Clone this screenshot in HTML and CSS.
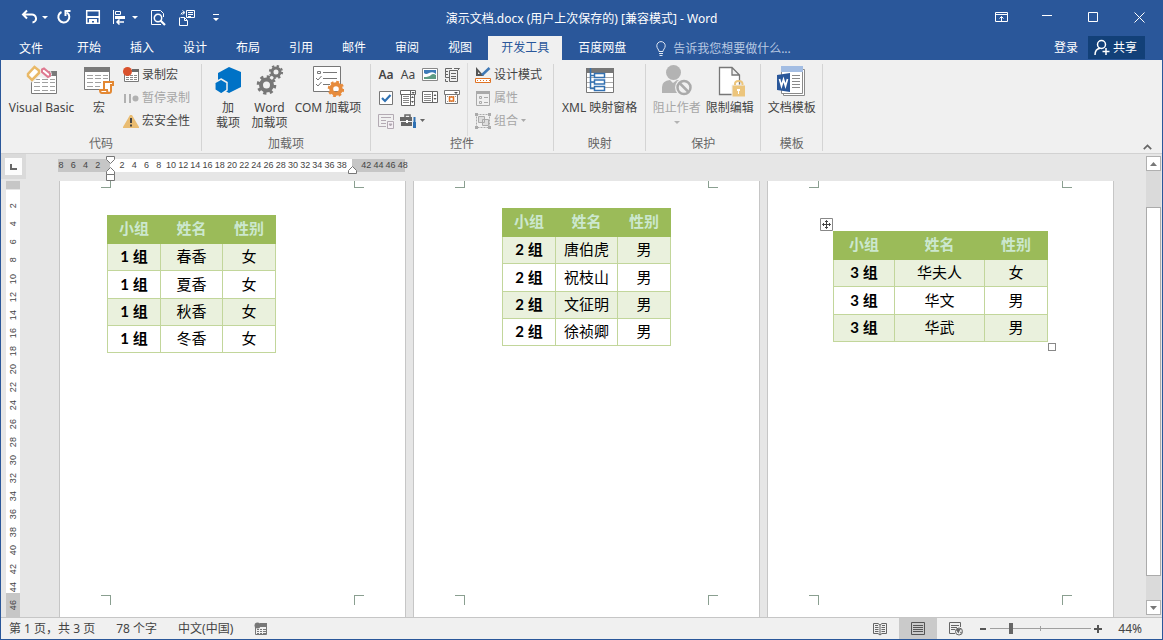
FILE: index.html
```html
<!DOCTYPE html>
<html lang="zh-CN">
<head>
<meta charset="utf-8">
<title>演示文档.docx - Word</title>
<link rel="stylesheet" href="styles.css">
</head>
<body>
<div class="window">
  <header class="titlebar">
    <div class="qat">
      <button class="qat-btn split" aria-label="撤消"><svg width="16" height="16" viewBox="0 0 16 16" fill="none" stroke="#fff" stroke-width="2"><path d="M6 1.500L2 5.500L6 9.500M2 5.500H10.500A4 4 0 0 1 11.500 13.500"/></svg></button>
      <button class="qat-drop" aria-label="撤消选项"><svg width="6" height="3" viewBox="0 0 6 3" fill="#fff"><path d="M0 0H6L3 3Z"/></svg></button>
      <button class="qat-btn" aria-label="重复"><svg width="16" height="16" viewBox="0 0 16 16" fill="none" stroke="#fff" stroke-width="2"><path d="M5.500 3A5.500 5.500 0 1 0 11 3.500M9.500 7V2H14.500"/></svg></button>
      <button class="qat-btn" aria-label="保存"><svg width="16" height="16" viewBox="0 0 16 16" fill="none" stroke="#fff" stroke-width="1.500"><path d="M1.700 1.700H14.300V14.300H1.700Z"/><path fill="#fff" stroke="none" d="M2 7H14V9H2ZM4 10H12V14H9V12H7V14H4Z"/></svg></button>
      <button class="qat-btn split" aria-label="对齐"><svg width="14" height="16" viewBox="0 0 14 16" fill="none" stroke="#fff"><path d="M1.500 1V15M3.500 2.500H8.500V5.500H3.500Z"/><path fill="#fff" stroke="none" d="M3 7H13V10H3Z"/><path stroke-width="1.500" d="M12 13H5M7.500 10.500L5 13L7.500 15.500"/></svg></button>
      <button class="qat-drop" aria-label="对齐选项"><svg width="6" height="3" viewBox="0 0 6 3" fill="#fff"><path d="M0 0H6L3 3Z"/></svg></button>
      <button class="qat-btn preview" aria-label="打印预览"><svg width="16" height="17" viewBox="0 0 16 17" fill="none" stroke="#fff"><path d="M13.500 8V4.500L10.500 1.500H1.500V15.500H11"/><circle cx="8" cy="9" r="3.700" stroke-width="1.500"/><path stroke-width="2.200" d="M10.500 11.500L15 16"/></svg></button>
      <button class="qat-btn" aria-label="比较"><svg width="18" height="17" viewBox="0 0 18 17" fill="none" stroke="#fff"><path d="M8.500 1.500H16.500V8.500H8.500ZM10 3.500H15M10 5.500H15M10 7.500H13M2.500 8.500H6.500L9.500 11.500V16.500H1.500V8.500M6.500 8.500V11.500H9M3 5.500Q3 3.500 6 3.500M4.500 1.500L7 3.500L4.500 5.500"/></svg></button>
      <button class="qat-btn" aria-label="自定义快速访问工具栏"><svg width="6" height="7" viewBox="0 0 6 7" fill="#fff"><path d="M0 0H6V1H0ZM0 4H6L3 7Z"/></svg></button>
    </div>
    <h1 class="doc-title">演示文档.docx (用户上次保存的) [兼容模式] - Word</h1>
    <div class="win-controls">
      <button aria-label="功能区显示选项"><svg width="13" height="11" viewBox="0 0 13 11" fill="none" stroke="#fff"><path d="M.5.5H12.500V9.500H.5ZM.5 2.500H12.500M6.500 9V4.500M4.500 6.500L6.500 4.500L8.500 6.500"/></svg></button>
      <button aria-label="最小化"><svg width="10" height="10" viewBox="0 0 10 10" stroke="#fff"><path d="M0 3.500H10"/></svg></button>
      <button aria-label="最大化"><svg width="10" height="10" viewBox="0 0 10 10" fill="none" stroke="#fff"><path d="M.5.5H9.500V9.500H.5Z"/></svg></button>
      <button aria-label="关闭"><svg width="11" height="11" viewBox="0 0 11 11" stroke="#fff"><path d="M.5.5L10.500 10.500M10.500.5L.5 10.500"/></svg></button>
    </div>
  </header>

  <nav class="tabs">
    <button class="tab file">文件</button>
    <button class="tab">开始</button>
    <button class="tab">插入</button>
    <button class="tab">设计</button>
    <button class="tab">布局</button>
    <button class="tab">引用</button>
    <button class="tab">邮件</button>
    <button class="tab">审阅</button>
    <button class="tab">视图</button>
    <button class="tab active">开发工具</button>
    <button class="tab">百度网盘</button>
    <label class="tell-me">
      <svg width="10" height="15" viewBox="0 0 10 15" fill="none" stroke="#dfe7f3"><path d="M3 10.500C3 8.500 .8 7.500 .8 4.800A4.200 4.200 0 0 1 9.200 4.800C9.200 7.500 7 8.500 7 10.500ZM3 12.500H7M3.500 14.500H6.500"/></svg>
      <input type="text" aria-label="告诉我您想要做什么" placeholder="告诉我您想要做什么...">
    </label>
    <button class="sign-in">登录</button>
    <button class="share"><svg width="16" height="17" viewBox="0 0 16 17" fill="none" stroke="#fff" stroke-width="1.500"><circle cx="7.500" cy="5.500" r="4"/><path d="M1 16C1 12 3 9.800 6 9.300M12 9V16M8.500 12.500H15.500"/></svg>共享</button>
  </nav>

  <section class="ribbon">
    <div class="group">
      <div class="group-body g-code">
        <button class="big vb"><svg width="32" height="30" viewBox="0 0 32 30"><path fill="#fff" stroke="#7a7a7a" d="M5.500 8.500H30.500V28.500H5.500Z"/><path fill="#7a7a7a" d="M22 6H31V11H22Z"/><path stroke="#a0a0a0" stroke-dasharray="6 2" d="M8 14.500H29M8 17.500H29M8 21.500H29M8 25.500H29"/><path fill="#f0f0f0" d="M0 8H20L25 6L26 10L21 14L13 12L6 18Z"/><path fill="#fff" stroke="#e9b968" stroke-width="2.500" d="M8.500 2L13 5.500V8L6 15L2 11V9Z"/><path fill="#fff" stroke="#df7991" stroke-width="2" d="M16 4.500L18 3.500L24 8.500V11L22 12L16 7Z"/></svg><span>Visual Basic</span></button>
        <button class="big macro"><svg width="32" height="30" viewBox="0 0 32 30"><path fill="#fff" stroke="#7a7a7a" d="M1.500 2.500H26.500V24.500H1.500Z"/><path fill="#7a7a7a" d="M1 2H27V7H1Z"/><path stroke="#a0a0a0" stroke-dasharray="6 2" d="M4 10.500H25M4 13.500H25M4 17.500H25M4 21.500H17"/><path fill="#fff" stroke="#e38833" stroke-width="2" d="M21 26V17H30V20H28V26Q28 28 26 28H19Q17 28 17 25H24Q24 28 26 28"/></svg><span>宏</span></button>
        <div class="stack">
          <button class="small"><svg width="16" height="16" viewBox="0 0 16 16"><path fill="#fff" stroke="#7a7a7a" d="M1.500 3.500H15.500V14.500H1.500Z"/><path fill="#6a6a6a" d="M9 2H16V5H9Z"/><path stroke="#888" stroke-dasharray="3 1" d="M3 8.500H14M3 10.500H14M3 12.500H14"/><circle cx="4.500" cy="4.500" r="4.500" fill="#d9512c"/></svg>录制宏</button>
          <button class="small" disabled><svg width="16" height="16" viewBox="0 0 16 16" fill="#b1b1b1"><path d="M1 4H3V13H1ZM6 4H8V13H6Z"/><circle cx="12.500" cy="8.500" r="3"/></svg>暂停录制</button>
          <button class="small"><svg width="16" height="16" viewBox="0 0 16 16"><path fill="#e9bc72" d="M7 2H9L16 14V15H0V14Z"/><path fill="#444" d="M7 5H9V10H7ZM7 11.500H9V13.500H7Z"/></svg>宏安全性</button>
        </div>
      </div>
      <div class="group-label">代码</div>
    </div>

    <div class="group">
      <div class="group-body g-addins">
        <button class="big addin"><svg width="28" height="30" viewBox="0 0 28 30" fill="#0072c6"><path d="M15 2L27 7V22L15 28L4 22V8Z"/><path stroke="#f0f0f0" stroke-width="1.500" d="M7 14L13 17.500V25L7 29L.8 25V17.500Z"/></svg><span>加<br>载项</span></button>
        <button class="big word-addin"><svg width="28" height="30" viewBox="0 0 28 30" fill="none" stroke="#777"><circle cx="10.500" cy="20" r="5.500" stroke-width="4"/><circle cx="10.500" cy="20" r="8.300" stroke-width="3" stroke-dasharray="3.200 3.320"/><circle cx="20" cy="7" r="4" stroke-width="3"/><circle cx="20" cy="7" r="6" stroke-width="2.200" stroke-dasharray="2.300 2.410"/></svg><span>Word<br>加载项</span></button>
        <button class="big com"><svg width="32" height="32" viewBox="0 0 32 32" fill="none"><path fill="#fff" stroke="#777" d="M1.500 1.500H28.500V26.500H1.500Z"/><path stroke="#777" d="M5.500 6.500H8.500V8.500H5.500ZM11 7.500H25M11 13.500H25M11 19.500H18M4 13L6 15L9.500 11M4 19L6 21L9.500 17"/><circle cx="24" cy="24" r="4.800" stroke="#e78b3c" stroke-width="4"/><circle cx="24" cy="24" r="7" stroke="#e78b3c" stroke-width="2.500" stroke-dasharray="2.800 2.700"/></svg><span>COM 加载项</span></button>
      </div>
      <div class="group-label">加载项</div>
    </div>

    <div class="group">
      <div class="group-body g-controls">
        <div class="control-grid">
          <button class="aa bold" aria-label="格式文本">Aa</button>
          <button class="aa" aria-label="纯文本">Aa</button>
          <button aria-label="图片"><svg width="16" height="16" viewBox="0 0 16 16"><path fill="#fff" stroke="#888" d="M.5 1.500H15.500V13.500H.5Z"/><path fill="#3d7ab8" d="M2 3H14V7Q11 4 7 6Q4 8 2 6Z"/><path fill="#5d9b83" d="M2 10Q7 10 9 8T14 8V12H2Z"/></svg></button>
          <button aria-label="构建基块"><svg width="16" height="16" viewBox="0 0 16 16" fill="none" stroke="#666"><path d="M5.500 3.500H13.500V14.500H5.500ZM7 6.500H12M7 9.500H12M7 11.500H12M8 1.500H1.500V10.500H5M1 4.500H4M1 7.500H4M10 1.500H15.500L13.500 3.500M1.500 12V14.500H4"/></svg></button>
          <button aria-label="复选框"><svg width="16" height="16" viewBox="0 0 16 16" fill="none"><path fill="#fff" stroke="#777" d="M1.500 1.500H14.500V14.500H1.500Z"/><path stroke="#2f71b3" stroke-width="2.200" d="M4 8L7 11L12.500 5"/></svg></button>
          <button aria-label="组合框"><svg width="16" height="16" viewBox="0 0 16 16" fill="none"><path fill="#fff" stroke="#666" d="M.5.500H15.500V4.500H14.500V15.500H1.500V4.500H.5ZM10.500 1V15M1 4.500H15"/><path stroke="#888" d="M3 6.500H9M3 8.500H9M3 10.500H9M3 12.500H9"/><path fill="#555" d="M11.500 2H15L13 4ZM11 8L12.500 6L14 8ZM11 11H14L12.500 13Z"/></svg></button>
          <button aria-label="下拉列表"><svg width="16" height="16" viewBox="0 0 16 16" fill="none"><path fill="#fff" stroke="#666" d="M.5 1.500H15.500V12.500H.5ZM10.500 1.500V12.500"/><path stroke="#888" d="M2 4.500H9M2 6.500H9M2 8.500H9M2 10.500H9"/><path fill="#555" d="M11.500 6L13 4L14.500 6ZM11.500 8H14.500L13 10Z"/></svg></button>
          <button aria-label="日期选取器"><svg width="16" height="16" viewBox="0 0 16 16" fill="none"><path fill="#fff" stroke="#777" d="M.5.500H15.500V4.500H13.500V13.500H1.500V4.500H.5ZM1 4.500H14"/><path fill="#555" d="M10 2H14L12 4Z"/><path stroke="#999" stroke-dasharray="1 1" d="M3 6.500H12M3 11.500H12"/><path stroke="#e07426" stroke-width="1.500" d="M5.500 7H9.500V11H5.500Z"/></svg></button>
          <button aria-label="重复节" disabled><svg width="16" height="16" viewBox="0 0 16 16" fill="none" stroke="#b3aab3"><path d="M8 13.500H.5V1.500H15.500V7M3 4.500H13M3 7.500H8M3 10.500H8"/><path fill="#f5f0f5" d="M9.500 8.500H15.500V15.500H9.500Z"/><path fill="#aaa" d="M11 11H14L12.500 13Z"/></svg></button>
          <button class="legacy" aria-label="旧式工具"><svg width="17" height="16" viewBox="0 0 17 16"><path fill="none" stroke="#666" stroke-width="1.500" d="M5 4V2H10V4"/><path fill="#666" d="M0 4H14V8H0ZM1 9H14V13H1Z"/><path fill="#fff" d="M6 7H8V10H6Z"/><path stroke="#f0f0f0" stroke-width="5" d="M14.500 4V15"/><path stroke="#2f71b3" stroke-width="2" d="M14.500 4V9"/><path stroke="#2f71b3" stroke-width="3" d="M14.500 9V15"/></svg><svg width="5" height="3" viewBox="0 0 5 3" fill="#666"><path d="M0 0H5L2.500 3Z"/></svg></button>
        </div>
        <div class="stack ruled">
          <button class="small"><svg width="16" height="16" viewBox="0 0 16 16"><path fill="#555" fill-rule="evenodd" d="M1 0L9 9H1ZM3 5V7H5Z"/><path stroke="#3f78b5" stroke-width="2.500" d="M14.500 1L7 8"/><path fill="#fff" stroke="#e07426" d="M.5 11.500H15.500V15.500H.5Z"/><path stroke="#e07426" stroke-dasharray="1 2" d="M2 13.500H15"/></svg>设计模式</button>
          <button class="small" disabled><svg width="16" height="16" viewBox="0 0 16 16" fill="none" stroke="#aaa"><path d="M1.500 1.500H14.500V15.500H1.500ZM4.500 6.500H6.500V8.500H4.500ZM4.500 11.500H6.500V13.500H4.500ZM9 7.500H13M9 12.500H13"/><path fill="#aaa" stroke="none" d="M1 1H15V4H1Z"/></svg>属性</button>
          <button class="small" disabled><svg width="16" height="16" viewBox="0 0 16 16" fill="none" stroke="#aaa"><path d="M1.500 1.500H14.500V14.500H1.500Z" stroke-dasharray="2 1"/><path fill="#ddd" d="M3.500 3.500H9.500V9.500H3.500ZM7.500 6.500H13.500V12.500H7.500Z"/><path fill="#aaa" stroke="none" d="M0 0H3V3H0ZM13 0H16V3H13ZM0 13H3V16H0ZM13 13H16V16H13Z"/></svg>组合<svg width="5" height="3" viewBox="0 0 5 3" fill="#aaa"><path d="M0 0H5L2.500 3Z"/></svg></button>
        </div>
      </div>
      <div class="group-label">控件</div>
    </div>

    <div class="group">
      <div class="group-body g-map">
        <button class="big"><svg width="32" height="30" viewBox="0 0 32 30" fill="none"><path fill="#fff" stroke="#777" d="M2.500 3.500H29.500V27.500H2.500Z"/><path fill="#777" d="M2 3H30V8H2Z"/><path stroke="#aaa" d="M3 12.500H29M3 17.500H29M3 22.500H29"/><path fill="#fff" stroke="#3472b2" stroke-width="1.500" d="M10.500 8.500H20.500V12.500H10.500ZM10.500 15H20.500V19H10.500ZM10.500 21.500H20.500V25.500H10.500Z"/><path stroke="#3472b2" stroke-width="1.500" d="M6.500 3V23.500H10M6.500 10.500H10M6.500 17H10"/></svg><span>XML 映射窗格</span></button>
      </div>
      <div class="group-label">映射</div>
    </div>

    <div class="group">
      <div class="group-body g-protect">
        <button class="big" disabled><svg width="32" height="32" viewBox="0 0 32 32" fill="#b3b3b3"><circle cx="12.500" cy="7.500" r="7.500"/><path d="M1 28V22Q1 16 9 15L12 18L16 15Q22 16 23 22V28Z"/><circle cx="23" cy="22.500" r="9" fill="#f0f0f0"/><circle cx="23" cy="22.500" r="6.500" fill="#f0f0f0" stroke="#aaa" stroke-width="2.500"/><path stroke="#aaa" stroke-width="2.500" d="M18.500 18L27.500 27"/></svg><span>阻止作者</span><svg class="big-drop" width="6" height="3" viewBox="0 0 6 3" fill="#b3b3b3"><path d="M0 0H6L3 3Z"/></svg></button>
        <button class="big"><svg width="32" height="32" viewBox="0 0 32 32" fill="none"><path fill="#fff" stroke="#777" stroke-width="1.300" d="M5.500 2.500H18L25.500 10V29.500H5.500ZM18 2.500V10H25.500"/><path fill="#ecc57c" stroke="#f0f0f0" d="M18 20H31.500V32H18Z"/><path stroke="#ecc57c" stroke-width="2" d="M21 20Q20.500 16 24.700 16Q29 16 28.500 20"/><path fill="#fff" d="M23 24H26V26H25V29H24V26H23Z"/></svg><span>限制编辑</span></button>
      </div>
      <div class="group-label">保护</div>
    </div>

    <div class="group">
      <div class="group-body g-template">
        <button class="big"><svg width="32" height="32" viewBox="0 0 32 32"><path fill="#fff" stroke="#8a8a8a" d="M7.500 4.500H28.500V30.500H7.500Z"/><path fill="#fff" stroke="#8a8a8a" d="M5.500 2.500H26.500V28.500H5.500Z"/><path fill="#a3bde3" d="M5 1H27V7H5Z"/><path stroke="#8a8a8a" d="M16 10.500H24M16 13.500H24M16 16.500H24M16 19.500H24M16 22.500H24"/><path fill="#2a579a" d="M1 10L14 8V27L1 25Z"/><path fill="none" stroke="#fff" stroke-width="1.700" d="M3.500 14L5.500 21L7.500 14.500L9.500 21L11.500 14"/></svg><span>文档模板</span></button>
      </div>
      <div class="group-label">模板</div>
    </div>
    <button class="collapse" aria-label="折叠功能区"><svg width="9" height="6" viewBox="0 0 9 6" fill="none" stroke="#666" stroke-width="1.700"><path d="M.8 5.200L4.500 1.500L8.200 5.200"/></svg></button>
  </section>

  <div class="workspace">
    <div class="canvas">
      <div class="ruler-row">
        <button class="tab-stop" aria-label="左对齐制表符"><svg width="7" height="7" viewBox="0 0 7 7" fill="none" stroke="#666" stroke-width="2"><path d="M1 1V6H7"/></svg></button>
        <div class="h-ruler">
          <div class="h-numbers"><span>8</span><span>6</span><span>4</span><span>2</span><span></span><span>2</span><span>4</span><span>6</span><span>8</span><span>10</span><span>12</span><span>14</span><span>16</span><span>18</span><span>20</span><span>22</span><span>24</span><span>26</span><span>28</span><span>30</span><span>32</span><span>34</span><span>36</span><span>38</span><span></span><span>42</span><span>44</span><span>46</span><span>48</span></div>
          <svg class="indent left" width="11" height="26" viewBox="0 0 11 26" fill="#fff" stroke="#777"><path d="M1.500.5H9.500V3.500L5.500 7.500L1.500 3.500ZM5.500 11.500L9.500 15.500V18.500H1.500V15.500ZM1.500 18.500H9.500V24.500H1.500Z"/></svg>
          <svg class="indent right" width="11" height="10" viewBox="0 0 11 10" fill="#fff" stroke="#777"><path d="M5.500 1.500L9.500 5.500V8.500H1.500V5.500Z"/></svg>
        </div>
      </div>
      <div class="page-row">
        <div class="v-ruler"><span>2</span><span>4</span><span>6</span><span>8</span><span>10</span><span>12</span><span>14</span><span>16</span><span>18</span><span>20</span><span>22</span><span>24</span><span>26</span><span>28</span><span>30</span><span>32</span><span>34</span><span>36</span><span>38</span><span>40</span><span>42</span><span>44</span><span>46</span></div>
        <main class="pages">
          <article class="page first">
            <i class="mark tl"></i><i class="mark tr"></i><i class="mark bl"></i><i class="mark br"></i>
            <table class="roster">
              <colgroup><col class="w-side"><col class="w-name"><col class="w-side"></colgroup>
              <thead><tr><th>小组</th><th>姓名</th><th>性别</th></tr></thead>
              <tbody>
                <tr><th>1 组</th><td>春香</td><td>女</td></tr>
                <tr><th>1 组</th><td>夏香</td><td>女</td></tr>
                <tr><th>1 组</th><td>秋香</td><td>女</td></tr>
                <tr><th>1 组</th><td>冬香</td><td>女</td></tr>
              </tbody>
            </table>
          </article>
          <article class="page second">
            <i class="mark tl"></i><i class="mark tr"></i><i class="mark bl"></i><i class="mark br"></i>
            <table class="roster">
              <colgroup><col class="w-side"><col class="w-name"><col class="w-side"></colgroup>
              <thead><tr><th>小组</th><th>姓名</th><th>性别</th></tr></thead>
              <tbody>
                <tr><th>2 组</th><td>唐伯虎</td><td>男</td></tr>
                <tr><th>2 组</th><td>祝枝山</td><td>男</td></tr>
                <tr><th>2 组</th><td>文征明</td><td>男</td></tr>
                <tr><th>2 组</th><td>徐祯卿</td><td>男</td></tr>
              </tbody>
            </table>
          </article>
          <article class="page third">
            <i class="mark tl"></i><i class="mark tr"></i><i class="mark bl"></i><i class="mark br"></i>
            <div class="selected-table">
              <svg class="move-handle" width="13" height="13" viewBox="0 0 13 13" fill="none" stroke="#444"><path fill="#fff" stroke="#888" d="M.5.5H12.500V12.500H.5Z"/><path d="M6.500 2.500V10.500M2.500 6.500H10.500M5 4L6.500 2.500L8 4M5 9L6.500 10.500L8 9M4 5L2.500 6.500L4 8M9 5L10.500 6.500L9 8"/></svg>
              <table class="roster">
                <colgroup><col class="w-group"><col class="w-wide"><col class="w-sex"></colgroup>
                <thead><tr><th>小组</th><th>姓名</th><th>性别</th></tr></thead>
                <tbody>
                  <tr><th>3 组</th><td>华夫人</td><td>女</td></tr>
                  <tr><th>3 组</th><td>华文</td><td>男</td></tr>
                  <tr><th>3 组</th><td>华武</td><td>男</td></tr>
                </tbody>
              </table>
              <i class="size-handle"></i>
            </div>
          </article>
        </main>
      </div>
    </div>
    <div class="scrollbar">
      <button aria-label="向上滚动"><svg width="7" height="4" viewBox="0 0 7 4" fill="#777"><path d="M3.500 0L7 4H0Z"/></svg></button>
      <div class="track"><div class="thumb"></div></div>
      <button aria-label="向下滚动"><svg width="7" height="4" viewBox="0 0 7 4" fill="#777"><path d="M0 0H7L3.500 4Z"/></svg></button>
    </div>
  </div>

  <footer class="status">
    <span>第 1 页，共 3 页</span>
    <span>78 个字</span>
    <span>中文(中国)</span>
    <button class="record" aria-label="录制宏"><svg width="14" height="14" viewBox="0 0 14 14" fill="none" stroke="#777"><path d="M1.500 5V12.500H12.500V2.500H7M3 7.500H12M3 9.500H12M3 11.500H12"/><path stroke="#f0f0f0" d="M5.500 6V12M8.500 6V12"/><path fill="#777" stroke="none" d="M6 1H13V5H6Z"/><circle cx="3.500" cy="3.500" r="3" fill="#777" stroke="none"/></svg></button>
    <div class="views">
      <button aria-label="阅读视图"><svg width="14" height="14" viewBox="0 0 14 14" fill="none" stroke="#666"><path d="M.5 1.500H5L7 3L9 1.500H13.500V11.500H9L7 13L5 11.500H.5ZM7 3V13M2 3.500H5M2 5.500H5.500M2 7.500H5.500M2 9.500H5.500M9 3.500H12M8.500 5.500H12M8.500 7.500H12M8.500 9.500H12"/></svg></button>
      <button class="on" aria-label="页面视图"><svg width="14" height="14" viewBox="0 0 14 14" fill="none" stroke="#555"><path d="M.5.5H13.500V12.500H.5ZM2 3.500H12M2 5.500H12M2 7.500H12M2 9.500H12"/></svg></button>
      <button aria-label="Web 版式视图"><svg width="14" height="14" viewBox="0 0 14 14" fill="none" stroke="#666"><path d="M6 11.500H.5V.5H11.500V5M2 3.500H10M2 5.500H8M2 7.500H6"/><circle cx="10" cy="9.500" r="3.500" fill="#f0f0f0"/><path fill="#666" stroke="none" d="M7 8L9 6.500L12 7L10.500 9L9.500 11.500ZM11 10L13 9.500L12 12Z"/></svg></button>
    </div>
    <div class="zoom">
      <button aria-label="缩小"><svg width="8" height="8" viewBox="0 0 8 8" stroke="#555" stroke-width="2"><path d="M1 4H7"/></svg></button>
      <input type="range" min="0" max="100" value="19" aria-label="显示比例">
      <button aria-label="放大"><svg width="8" height="8" viewBox="0 0 8 8" stroke="#555" stroke-width="2"><path d="M0 4H8M4 0V8"/></svg></button>
      <span class="percent">44%</span>
    </div>
  </footer>
</div>
</body>
</html>
```
FILE: styles.css
```css
* { box-sizing: border-box; }

body {
  margin: 0;
  font: 12px/15px "Noto Sans", "Noto Sans CJK SC", sans-serif;
  color: #444;
}

button, input {
  font: inherit;
  color: inherit;
  background: none;
  border: 0;
  padding: 0;
  margin: 0;
}

svg { display: block; flex: none; }

.window {
  display: flex;
  flex-direction: column;
  height: 100vh;
  border: 1px solid #2a579a;
  border-top: 0;
  background: #e6e6e6;
  overflow: hidden;
}

/* Title bar */
.titlebar {
  display: grid;
  grid-template-columns: 1fr auto 1fr;
  align-items: center;
  height: 36px;
  flex: none;
  padding-bottom: 2px;
  background: #2a579a;
  color: #fff;
}

.qat { display: flex; padding-left: 16px; }
.qat button {
  display: flex;
  justify-content: center;
  align-items: center;
  height: 32px;
}
.qat-btn { width: 29px; }
.qat .split { width: 24px; }
.qat-drop { width: 8px; }
.preview { margin-left: 4px; }

.doc-title { margin: 0; padding-top: 2px; font-size: 12px; font-weight: 400; white-space: nowrap; }

.win-controls { display: flex; justify-content: flex-end; }
.win-controls button {
  display: flex;
  justify-content: center;
  align-items: center;
  width: 46px;
  height: 32px;
}

/* Tabs */
.tabs {
  display: flex;
  gap: 3px;
  height: 24px;
  flex: none;
  background: #2a579a;
  color: #fff;
  white-space: nowrap;
}
.tab, .sign-in { padding: 0 13px 2px; }
.tab.file { width: 60px; padding: 0; text-align: center; }
.tab.active { background: #f0f0f0; color: #2a579a; }

.tell-me {
  display: flex;
  align-items: center;
  gap: 7px;
  flex: 1;
  padding-left: 14px;
  color: #b9c9e2;
}
.tell-me input { width: 160px; }
.tell-me input::placeholder { color: #b9c9e2; opacity: 1; }

.tabs .sign-in { padding: 0 7px 2px; }
.share {
  display: flex;
  align-items: center;
  gap: 3px;
  height: 23px;
  padding: 0 8px 0 6px;
  margin-right: 17px;
  background: #124078;
}

/* Ribbon */
.ribbon {
  display: flex;
  flex: none;
  padding: 4px 0 2px;
  background: #f0f0f0;
  border-bottom: 1px solid #d2d2d2;
}
.group {
  display: flex;
  flex-direction: column;
  border-right: 1px solid #d4d4d4;
}
.group-body { display: flex; height: 72px; }
.group-label { text-align: center; color: #666; }

.g-code { padding: 0 11px 0 4px; gap: 2px; }
.g-addins { padding: 0 5px 0 6px; }
.g-controls { padding: 0 11px 0 4px; }
.g-map { padding: 0 8px; }
.g-protect, .g-template { padding: 0 4px; }

.big {
  position: relative;
  display: flex;
  flex-direction: column;
  align-items: center;
  justify-content: space-between;
  min-width: 53px;
  padding-top: 1px;
  white-space: nowrap;
}
.big > span { height: 36px; }
.big:disabled, .small:disabled { color: #a6a6a6; }
.big-drop { position: absolute; bottom: 12px; }
.vb { min-width: 73px; }
.macro { min-width: 38px; }
.addin { min-width: 40px; }
.word-addin { min-width: 43px; }
.com { min-width: 74px; }

.stack, .control-grid { margin-top: -1px; }
.stack { display: grid; grid-template-rows: repeat(3, 23px); align-content: start; }
.g-code .stack { margin-left: 3px; }
.small {
  display: flex;
  align-items: center;
  gap: 3px;
  white-space: nowrap;
}

.control-grid {
  display: grid;
  grid-template: repeat(3, 23px) / repeat(4, 22px);
}
.control-grid button {
  display: flex;
  justify-content: center;
  align-items: center;
}
.aa.bold { font-weight: 600; }
.control-grid .legacy { grid-column: span 2; justify-content: flex-start; gap: 3px; padding-left: 3px; }
.ruled { margin-left: 4px; padding-left: 7px; border-left: 1px solid #dcdcdc; }

.collapse { margin-left: auto; margin-right: 10px; align-self: flex-end; padding-bottom: 1px; }

/* Document area */
.workspace { display: flex; flex: 1; min-height: 0; }
.canvas { display: flex; flex-direction: column; flex: 1; min-width: 0; }

.ruler-row { display: flex; height: 27px; flex: none; }
.tab-stop {
  display: flex;
  justify-content: center;
  align-items: center;
  width: 25px;
  height: 25px;
  border: 4px solid #dadada;
  background: #fcfcfc;
  margin-right: 32px;
}
.h-ruler {
  position: relative;
  width: 347px;
  height: 13px;
  margin-top: 5px;
  background: linear-gradient(to right, #c6c6c6 52px, #fff 52px 294px, #c6c6c6 294px);
}
.h-numbers {
  display: flex;
  width: 354px;
  margin-left: -3px;
  font: 9px/13px "Liberation Sans", sans-serif;
}
.h-numbers span { display: flex; justify-content: center; flex: 1 1 0; min-width: 0; }
.indent { position: absolute; }
.indent.left { left: 47px; top: -3px; z-index: 1; }
.indent.right { left: 289px; top: 6px; }

.page-row { display: flex; flex: 1; min-height: 0; }
.v-ruler {
  display: flex;
  flex-direction: column;
  width: 14px;
  margin: 0 39px 0 5px;
  padding: 16px 0 3px;
  background: linear-gradient(to bottom, #c6c6c6 8px, #e6e6e6 8px 9px, #fff 9px calc(100% - 24px), #c6c6c6 calc(100% - 24px));
  font: 9px/14px "Liberation Sans", sans-serif;
}
.v-ruler span {
  flex: 1 1 0;
  min-height: 0;
  writing-mode: vertical-rl;
  transform: rotate(180deg);
  text-align: center;
}

.pages { display: flex; gap: 7px; }
.page {
  position: relative;
  flex: none;
  width: 347px;
  background: #fff;
  border: solid #c6c6c6;
  border-width: 0 1px;
}
.first { padding: 34px 0 0 47px; }
.second { padding: 27px 0 0 88px; }
.third { padding: 50px 0 0 65px; }

.mark { position: absolute; width: 10px; height: 10px; border: 0 solid #8a9f90; }
.tl { top: 0; left: 41px; height: 7px; border-width: 0 1px 1px 0; }
.tr { top: 0; right: 41px; height: 7px; border-width: 0 0 1px 1px; }
.bl { bottom: 12px; left: 41px; border-width: 1px 1px 0 0; }
.br { bottom: 12px; right: 41px; border-width: 1px 0 0 1px; }

.roster {
  border-collapse: collapse;
  table-layout: fixed;
  width: 1px;
  font: 15px/20px "Noto Sans CJK SC", sans-serif;
  color: #000;
  text-align: center;
}
.w-side { width: 53px; }
.w-name { width: 62px; }
.w-group { width: 61px; }
.w-wide { width: 90px; }
.w-sex { width: 63px; }
.roster th, .roster td {
  height: 27px;
  padding: 0 0 2px;
  border: 1px solid #c2d69b;
  white-space: nowrap;
}
.roster tbody tr:nth-child(2) > * { height: 28px; }
.roster tbody th { font-family: Lato, "Noto Sans CJK SC", sans-serif; }
.roster thead th {
  height: 28px;
  padding-bottom: 4px;
  background: #9bbb59;
  border-color: #9bbb59;
  color: #cce8cf;
}
.roster tbody tr:nth-child(odd) { background: #eaf1dd; }

.selected-table { position: relative; width: 215px; }
.move-handle { position: absolute; left: -13px; top: -13px; }
.size-handle {
  position: absolute;
  right: -8px;
  bottom: -9px;
  width: 8px;
  height: 8px;
  border: 1px solid #888;
  background: #fff;
}

.scrollbar {
  display: flex;
  flex-direction: column;
  width: 15px;
  margin: 2px 1px 2px 0;
}
.scrollbar button {
  display: flex;
  justify-content: center;
  align-items: center;
  height: 15px;
  flex: none;
  border: 1px solid #b0b0b0;
  background: #fff;
}
.track { flex: 1; padding: 36px 0 24px; background: #dadada; }
.thumb { height: 100%; border: 1px solid #ababab; background: #fff; }

/* Status bar */
.status {
  display: flex;
  align-items: center;
  gap: 21px;
  height: 22px;
  flex: none;
  padding-left: 8px;
  background: #f0f0f0;
  border-top: 1px solid #c6c6c6;
  white-space: nowrap;
}
.views { display: flex; align-self: stretch; margin-left: auto; }
.views button {
  display: flex;
  justify-content: center;
  align-items: center;
  width: 38px;
}
.views .on { background: #cacaca; }
.zoom { display: flex; align-items: center; gap: 3px; margin-left: -17px; padding-right: 20px; }
.percent { margin-left: 13px; }

input[type="range"] {
  appearance: none;
  width: 101px;
  height: 11px;
  background:
    linear-gradient(#a0a0a0, #a0a0a0) center / 100% 1px no-repeat,
    linear-gradient(#a0a0a0, #a0a0a0) center / 1px 5px no-repeat;
}
input[type="range"]::-webkit-slider-thumb {
  appearance: none;
  width: 4px;
  height: 11px;
  background: #666;
}
```
